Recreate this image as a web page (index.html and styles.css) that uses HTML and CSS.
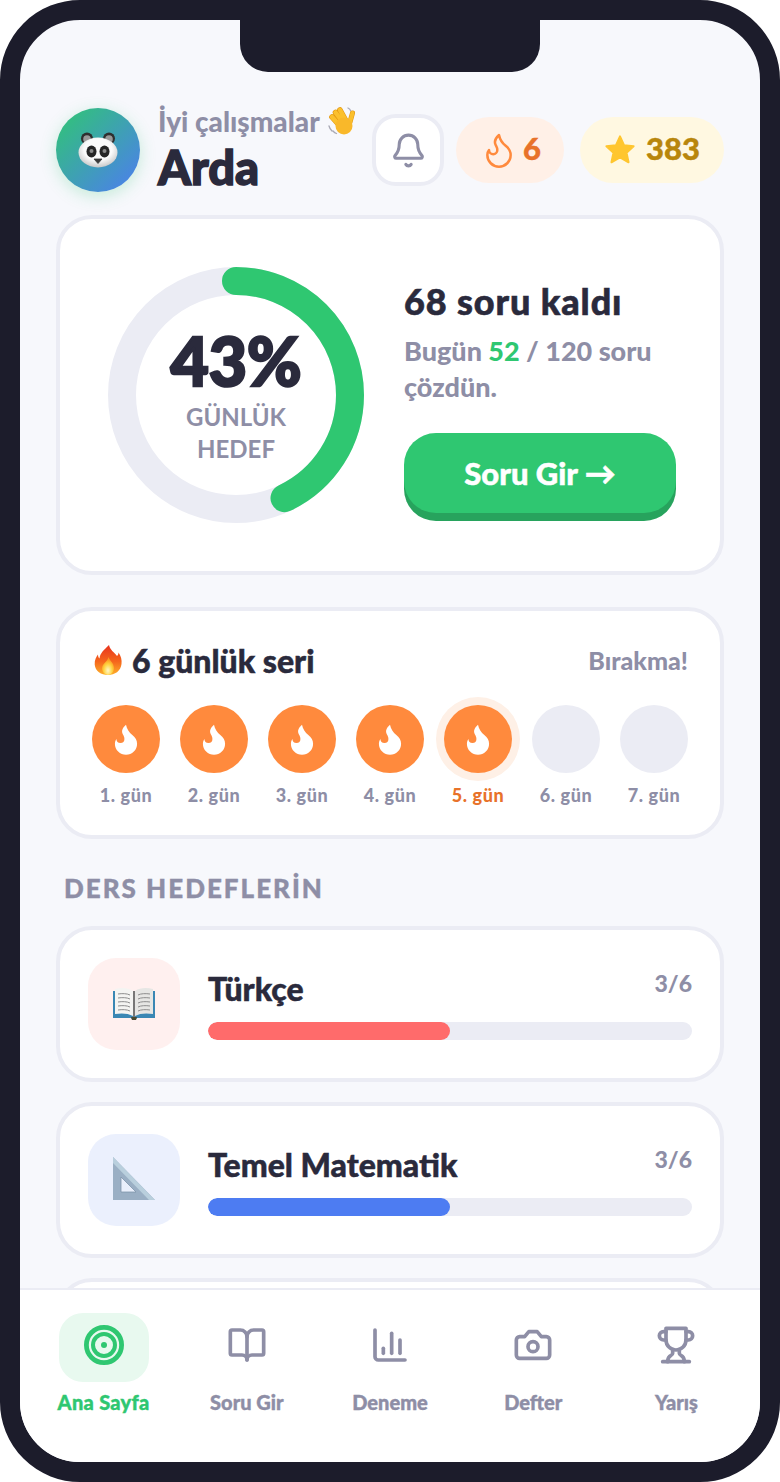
FILE: index.html
```html
<!DOCTYPE html>
<html lang="tr">
<head>
  <meta charset="UTF-8" />
  <meta name="viewport" content="width=device-width, initial-scale=1.0"/>
  <title>Ana Sayfa</title>
  <link rel="stylesheet" href="styles.css">
</head>
<body>
  <svg class="defs" width="0" height="0">
    <symbol id="flame" viewBox="0 0 24 24">
      <path d="M8.5 14.5A2.5 2.5 0 0 0 11 12c0-1.38-.5-2-1-3-1.072-2.143-.224-4.054 2-6 .5 2.5 2 4.9 4 6.5 2 1.6 3 3.5 3 5.5a7 7 0 1 1-14 0c0-1.153.433-2.294 1-3a2.5 2.5 0 0 0 2.5 2.5z"/>
    </symbol>
  </svg>

  <div class="phone">
    <div class="notch"></div>

    <main class="screen">
      <header class="top">
        <div class="avatar">
          <svg class="panda" viewBox="0 0 40 36">
            <defs>
              <radialGradient id="face" cx=".5" cy=".4" r=".65">
                <stop offset=".55" stop-color="#fbfbfb"/>
                <stop offset="1" stop-color="#bdbdbd"/>
              </radialGradient>
            </defs>
            <circle cx="9" cy="6.500" r="6" fill="#2f2f2f"/>
            <circle cx="31" cy="6.500" r="6" fill="#2f2f2f"/>
            <circle cx="9" cy="7" r="3.800" fill="#999"/>
            <circle cx="31" cy="7" r="3.800" fill="#999"/>
            <ellipse cx="20" cy="20.500" rx="19.500" ry="15" fill="url(#face)"/>
            <ellipse cx="13.500" cy="19.500" rx="5" ry="6" fill="#262626"/>
            <ellipse cx="26.500" cy="19.500" rx="5" ry="6" fill="#262626"/>
            <circle cx="13.500" cy="19" r="2" fill="#8a8a8a"/>
            <circle cx="26.500" cy="19" r="2" fill="#8a8a8a"/>
            <path d="M16 27h8l-4 4.500z" fill="#3a3a3a" stroke="#3a3a3a" stroke-width=".8" stroke-linejoin="round"/>
          </svg>
        </div>
        <div class="hello">
          <div class="hello-line">İyi çalışmalar
            <svg class="wave" viewBox="0 0 30 30">
              <path d="M3 20c.5 2 1.500 3.500 3 5M7 25c1 1.200 2 2 3.500 2.500M22 2c1.200.5 2.200 1.500 2.800 3" fill="none" stroke="#a9a9b5" stroke-width="1.300" stroke-linecap="round"/>
              <g fill="none" stroke-linecap="round">
                <path d="M6 11l8 9M9.500 6.500l7.500 10M14 4l6 11" stroke="#e2960f" stroke-width="5.600"/>
                <path d="M6 11l8 9M9.500 6.500l7.500 10M14 4l6 11" stroke="#fbc02d" stroke-width="4.500"/>
                <path d="M26.500 7l-2.500 9" stroke="#e2960f" stroke-width="5"/>
                <path d="M26.500 7l-2.500 9" stroke="#fbc02d" stroke-width="4"/>
              </g>
              <circle cx="18" cy="20" r="8.500" fill="#f9b82a"/>
            </svg>
          </div>
          <div class="name">Arda</div>
        </div>
        <div class="bell-btn">
          <svg class="ico" viewBox="0 0 24 24">
            <path d="M10.268 21a2 2 0 0 0 3.464 0"/>
            <path d="M3.262 15.326A1 1 0 0 0 4 17h16a1 1 0 0 0 .74-1.673C19.41 13.956 18 12.499 18 8A6 6 0 0 0 6 8c0 4.499-1.411 5.956-2.738 7.326"/>
          </svg>
        </div>
        <div class="pill pill-fire">
          <svg class="pill-flame"><use href="#flame"/></svg>
          <span>6</span>
        </div>
        <div class="pill pill-star">
          <svg class="pill-icon" viewBox="0 0 24 24">
            <path d="M12 1.800l3 6.600 7.200.8-5.300 4.900 1.500 7.100L12 17.600l-6.400 3.600 1.500-7.100L1.800 9.200l7.200-.8z" fill="#ffc62f" stroke="#ffc62f" stroke-width="1.500" stroke-linejoin="round"/>
          </svg>
          <span>383</span>
        </div>
      </header>

      <section class="card goal">
        <div class="ring">
          <svg viewBox="0 0 256 256">
            <circle class="ring-bg" cx="128" cy="128" r="114"/>
            <circle class="ring-val" cx="128" cy="128" r="114" pathLength="100" stroke-dasharray="43 100" transform="rotate(-90 128 128)"/>
          </svg>
          <div class="ring-text">
            <div class="percent">43%</div>
            <div class="ring-label">GÜNLÜK<br>HEDEF</div>
          </div>
        </div>
        <div class="goal-side">
          <h2>68 soru kaldı</h2>
          <p>Bugün <b>52</b> / 120 soru çözdün.</p>
          <button class="btn">Soru Gir →</button>
        </div>
      </section>

      <section class="card streak">
        <div class="streak-head">
          <div class="streak-title">
            <svg class="fire-emoji" viewBox="0 0 28 32">
              <defs>
                <linearGradient id="fire" x1="0" y1="0" x2="0" y2="1">
                  <stop offset="0" stop-color="#e8321e"/>
                  <stop offset=".55" stop-color="#f5661c"/>
                  <stop offset="1" stop-color="#fdb02a"/>
                </linearGradient>
                <radialGradient id="fire-core" cx=".5" cy=".75" r=".6">
                  <stop offset="0" stop-color="#fff7c8"/>
                  <stop offset=".6" stop-color="#ffd23e"/>
                  <stop offset="1" stop-color="#fb9a22"/>
                </radialGradient>
              </defs>
              <path d="M15 1c1 5 5 7 8 11 1-1 1.500-2 1.500-3.500C27 12 28 16 27.500 20c-.8 7-6.500 11-13.500 11S1.200 27 .7 20.500C.4 16 2.500 12.500 4 10.500c0 2 .5 3 1.500 4C6 9 10 6 15 1z" fill="url(#fire)"/>
              <path d="M14.500 13c.5 3 5.500 6 5.500 11 0 4-2.800 7-6 7s-6-3-6-6.500c0-5 5.500-6.500 6.500-11.500z" fill="url(#fire-core)"/>
            </svg>
            <span>6 günlük seri</span>
          </div>
          <span class="streak-note">Bırakma!</span>
        </div>
        <div class="days">
          <div class="day">
            <div class="dot done"><svg><use href="#flame"/></svg></div>
            <span>1. gün</span>
          </div>
          <div class="day">
            <div class="dot done"><svg><use href="#flame"/></svg></div>
            <span>2. gün</span>
          </div>
          <div class="day">
            <div class="dot done"><svg><use href="#flame"/></svg></div>
            <span>3. gün</span>
          </div>
          <div class="day">
            <div class="dot done"><svg><use href="#flame"/></svg></div>
            <span>4. gün</span>
          </div>
          <div class="day today">
            <div class="dot done"><svg><use href="#flame"/></svg></div>
            <span>5. gün</span>
          </div>
          <div class="day">
            <div class="dot"></div>
            <span>6. gün</span>
          </div>
          <div class="day">
            <div class="dot"></div>
            <span>7. gün</span>
          </div>
        </div>
      </section>

      <h3 class="section-title">DERS HEDEFLERİN</h3>

      <section class="card subject">
        <div class="subject-icon red-bg">
          <svg class="book" viewBox="0 0 44 36">
            <path d="M1 5h42v27H25l-1.500 2h-3L19 32H1z" fill="#3a87b4"/>
            <path d="M3 3c6-1.500 13-1.500 18 2v25c-5-3-12-3-18-2z" fill="#f4f4f2"/>
            <path d="M41 3c-6-1.500-13-1.500-18 2v25c5-3 12-3 18-2z" fill="#e6e6e4"/>
            <path d="M6 8c4-.6 9-.6 12 1M6 12c4-.6 9-.6 12 1M6 16c4-.6 9-.6 12 1M6 20c4-.6 9-.6 12 1M6 24c4-.6 9-.6 12 1M38 8c-4-.6-9-.6-12 1M38 12c-4-.6-9-.6-12 1M38 16c-4-.6-9-.6-12 1M38 20c-4-.6-9-.6-12 1M38 24c-4-.6-9-.6-12 1" fill="none" stroke="#8d8d8d" stroke-width="1"/>
            <path d="M21 5h2v26h-2z" fill="#777"/>
            <path d="M19 31h6l-1 3h-4z" fill="#4a4a30"/>
          </svg>
        </div>
        <div class="subject-body">
          <div class="subject-head">
            <span class="subject-name">Türkçe</span>
            <span class="subject-count">3/6</span>
          </div>
          <div class="bar"><div class="bar-fill red" style="width:50%"></div></div>
        </div>
      </section>

      <section class="card subject">
        <div class="subject-icon blue-bg">
          <svg class="square" viewBox="0 0 44 44">
            <path d="M1 1l42 43H1z" fill="#9aafc4"/>
            <path d="M1 1l42 43h-6L1 7z" fill="#b9cfdd"/>
            <path d="M9 21l15 15H9z" fill="#eaf0fc" stroke="#7f95ab" stroke-width=".8"/>
          </svg>
        </div>
        <div class="subject-body">
          <div class="subject-head">
            <span class="subject-name">Temel Matematik</span>
            <span class="subject-count">3/6</span>
          </div>
          <div class="bar"><div class="bar-fill blue" style="width:50%"></div></div>
        </div>
      </section>

      <section class="card subject"></section>
    </main>

    <nav class="tabs">
      <div class="tab active">
        <div class="tab-icon">
          <svg class="target" viewBox="0 0 40 40">
            <circle cx="20" cy="20" r="17.600" stroke-width="4.800"/>
            <circle cx="20" cy="20" r="11" stroke-width="4"/>
            <circle cx="20" cy="20" r="3" stroke="none" fill="#2fc771"/>
          </svg>
        </div>
        <span>Ana Sayfa</span>
      </div>
      <div class="tab">
        <div class="tab-icon">
          <svg class="ico" viewBox="0 0 24 24">
            <path d="M12 7v14"/>
            <path d="M3 18a1 1 0 0 1-1-1V4a1 1 0 0 1 1-1h5a4 4 0 0 1 4 4 4 4 0 0 1 4-4h5a1 1 0 0 1 1 1v13a1 1 0 0 1-1 1h-6a3 3 0 0 0-3 3 3 3 0 0 0-3-3z"/>
          </svg>
        </div>
        <span>Soru Gir</span>
      </div>
      <div class="tab">
        <div class="tab-icon">
          <svg class="ico" viewBox="0 0 24 24">
            <path d="M3 3v16a2 2 0 0 0 2 2h16"/>
            <path d="M8 17v-3"/>
            <path d="M13 17V5"/>
            <path d="M18 17V9"/>
          </svg>
        </div>
        <span>Deneme</span>
      </div>
      <div class="tab">
        <div class="tab-icon">
          <svg class="ico" viewBox="0 0 24 24">
            <path d="M14.500 4h-5L7 7H4a2 2 0 0 0-2 2v9a2 2 0 0 0 2 2h16a2 2 0 0 0 2-2V9a2 2 0 0 0-2-2h-3l-2.500-3z"/>
            <circle cx="12" cy="13" r="3"/>
          </svg>
        </div>
        <span>Defter</span>
      </div>
      <div class="tab">
        <div class="tab-icon">
          <svg class="ico" viewBox="0 0 24 24">
            <path d="M6 9H4.500a2.500 2.500 0 0 1 0-5H6"/>
            <path d="M18 9h1.500a2.500 2.500 0 0 0 0-5H18"/>
            <path d="M4 22h16"/>
            <path d="M10 14.660V17c0 .55-.47.98-.97 1.210C7.850 18.750 7 20.240 7 22"/>
            <path d="M14 14.660V17c0 .55.47.98.97 1.210C16.150 18.750 17 20.240 17 22"/>
            <path d="M18 2H6v7a6 6 0 0 0 12 0V2z"/>
          </svg>
        </div>
        <span>Yarış</span>
      </div>
    </nav>
  </div>
</body>
</html>
```

FILE: styles.css
```css
* {
  box-sizing: border-box;
}
body {
  margin: 0;
  background: #fff;
  font-family: "Lato", sans-serif;
  color: #2a2a3c;
}
.defs {
  position: absolute;
}
.phone {
  position: relative;
  width: 780px;
  height: 1482px;
  border: 20px solid #1c1c2b;
  border-radius: 80px;
  background: #f7f8fc;
  overflow: hidden;
}
.notch {
  position: absolute;
  top: 0;
  left: 220px;
  width: 300px;
  height: 52px;
  background: #1c1c2b;
  border-radius: 0 0 28px 28px;
  z-index: 3;
}
.screen {
  padding: 88px 36px 0;
}

/* ust kisim */
.top {
  display: flex;
  align-items: center;
  height: 84px;
  margin-bottom: 23px;
}
.avatar {
  width: 84px;
  height: 84px;
  flex: none;
  border-radius: 50%;
  background: linear-gradient(135deg, #2fc771, #4d7cf2);
  box-shadow: 0 4px 16px rgba(47, 199, 113, 0.25);
  display: flex;
  align-items: center;
  justify-content: center;
}
.panda {
  width: 40px;
  height: 36px;
}
.hello {
  margin-left: 18px;
  width: 214px;
}
.hello-line {
  display: flex;
  align-items: center;
  gap: 6px;
  height: 26px;
  font-size: 28px;
  font-weight: 900;
  line-height: 26px;
  color: #8e8ea6;
  white-space: nowrap;
}
.wave {
  width: 30px;
  height: 30px;
  flex: none;
}
.name {
  font-size: 47px;
  font-weight: 900;
  line-height: 50px;
  margin-top: 8px;
  -webkit-text-stroke: 1.5px #2a2a3c;
}
.bell-btn {
  width: 72px;
  height: 72px;
  flex: none;
  background: #fff;
  border: 4px solid #ebecf4;
  border-radius: 24px;
  display: flex;
  align-items: center;
  justify-content: center;
}
.ico {
  width: 40px;
  height: 40px;
  fill: none;
  stroke: #8e8ea6;
  stroke-width: 2.200;
  stroke-linecap: round;
  stroke-linejoin: round;
}
.bell-btn .ico {
  width: 37px;
  height: 37px;
  stroke-width: 2;
}
.pill {
  height: 66px;
  flex: none;
  border-radius: 33px;
  display: flex;
  align-items: center;
  justify-content: center;
  gap: 10px;
  font-size: 31px;
  font-weight: 900;
  -webkit-text-stroke: 0.4px currentColor;
}
.pill span {
  margin-top: -5px;
}
.pill-fire {
  width: 108px;
  margin-left: 12px;
  gap: 4px;
  background: #fff0e7;
  color: #e8722a;
}
.pill-star {
  width: 144px;
  margin-left: 16px;
  background: #fff8e1;
  color: #b8860b;
}
.pill-flame {
  width: 40px;
  height: 40px;
  fill: none;
  stroke: #ff8a3d;
  stroke-width: 1.500;
  stroke-linecap: round;
  stroke-linejoin: round;
}
.pill-icon {
  width: 32px;
  height: 32px;
}

/* kartlar */
.card {
  background: #fff;
  border: 4px solid #ebecf4;
  border-radius: 36px;
}
.goal {
  display: flex;
  align-items: center;
  gap: 40px;
  height: 360px;
  padding: 0 44px 0 48px;
  margin-bottom: 32px;
}
.ring {
  position: relative;
  width: 256px;
  height: 256px;
  flex: none;
}
.ring svg {
  display: block;
  width: 256px;
  height: 256px;
}
.ring-bg,
.ring-val {
  fill: none;
  stroke-width: 28;
}
.ring-bg {
  stroke: #ebecf4;
}
.ring-val {
  stroke: #2fc771;
  stroke-linecap: round;
}
.ring-text {
  position: absolute;
  top: 60px;
  left: 0;
  right: 0;
  text-align: center;
}
.percent {
  font-size: 66px;
  font-weight: 900;
  line-height: 68px;
  -webkit-text-stroke: 2.500px #2a2a3c;
}
.ring-label {
  margin-top: 6px;
  font-size: 24px;
  font-weight: 700;
  line-height: 32px;
  color: #8e8ea6;
}
.goal-side {
  flex: 1;
  padding-top: 10px;
}
.goal-side h2 {
  margin: 0 0 10px;
  font-size: 36px;
  font-weight: 900;
  line-height: 44px;
  letter-spacing: 0.9px;
  -webkit-text-stroke: 0.6px #2a2a3c;
}
.goal-side p {
  margin: 0 0 28px;
  font-size: 27px;
  font-weight: 900;
  line-height: 36px;
  color: #8e8ea6;
}
.goal-side b {
  color: #2fc771;
  font-weight: 900;
}
.btn {
  display: block;
  width: 100%;
  height: 80px;
  margin-bottom: 8px;
  border: none;
  border-radius: 32px;
  background: #2fc771;
  box-shadow: 0 8px 0 #27a35d;
  color: #fff;
  font-family: inherit;
  font-size: 31px;
  font-weight: 900;
  -webkit-text-stroke: 0.5px #fff;
}

.streak {
  padding: 28px 32px 0;
  height: 232px;
}
.streak-head {
  display: flex;
  align-items: center;
  justify-content: space-between;
  height: 42px;
}
.streak-title {
  display: flex;
  align-items: center;
  gap: 10px;
  font-size: 32px;
  font-weight: 900;
  -webkit-text-stroke: 0.5px #2a2a3c;
}
.fire-emoji {
  width: 28px;
  height: 32px;
  margin-left: 2px;
}
.streak-note {
  font-size: 25px;
  font-weight: 900;
  color: #8e8ea6;
}
.days {
  display: flex;
  gap: 20px;
  margin-top: 24px;
}
.day {
  width: 68px;
  display: flex;
  flex-direction: column;
  align-items: center;
  gap: 10px;
}
.day span {
  font-size: 18px;
  font-weight: 900;
  line-height: 24px;
  letter-spacing: 0.6px;
  color: #8e8ea6;
  white-space: nowrap;
}
.dot {
  width: 68px;
  height: 68px;
  border-radius: 50%;
  background: #ebecf4;
  display: flex;
  align-items: center;
  justify-content: center;
}
.dot.done {
  background: #ff8a3d;
}
.dot svg {
  width: 38px;
  height: 38px;
  fill: #fff;
}
.today .dot {
  box-shadow: 0 0 0 8px #fef0e6;
}
.today span {
  color: #e8722a;
}

.section-title {
  margin: 31px 0 20px 8px;
  font-size: 26px;
  font-weight: 900;
  line-height: 36px;
  letter-spacing: 2px;
  color: #8e8ea6;
  -webkit-text-stroke: 0.4px #8e8ea6;
}

.subject {
  display: flex;
  align-items: center;
  gap: 28px;
  height: 156px;
  padding: 0 28px;
  margin-bottom: 20px;
}
.subject-icon {
  width: 92px;
  height: 92px;
  flex: none;
  border-radius: 28px;
  display: flex;
  align-items: center;
  justify-content: center;
}
.red-bg {
  background: #fff0ef;
}
.blue-bg {
  background: #ebf0fd;
}
.book {
  width: 44px;
  height: 36px;
}
.square {
  width: 44px;
  height: 44px;
  margin-top: -4px;
}
.subject-body {
  flex: 1;
}
.subject-head {
  display: flex;
  justify-content: space-between;
  align-items: flex-start;
  height: 50px;
  margin-bottom: 4px;
}
.subject-name {
  font-size: 32px;
  font-weight: 900;
  line-height: 42px;
  -webkit-text-stroke: 0.5px #2a2a3c;
}
.subject-count {
  font-size: 23px;
  font-weight: 900;
  line-height: 30px;
  color: #8e8ea6;
}
.bar {
  height: 18px;
  border-radius: 9px;
  background: #ebecf4;
  overflow: hidden;
}
.bar-fill {
  height: 100%;
  border-radius: 9px;
}
.red {
  background: #ff6b6b;
}
.blue {
  background: #4d7cf2;
}

/* alt menu */
.tabs {
  position: absolute;
  left: 0;
  right: 0;
  bottom: 0;
  height: 174px;
  padding: 23px 12px 0;
  background: #fff;
  border-top: 2px solid #ebecf4;
  display: flex;
  z-index: 2;
}
.tab {
  flex: 1;
  display: flex;
  flex-direction: column;
  align-items: center;
  font-size: 20px;
  font-weight: 900;
  color: #8e8ea6;
  -webkit-text-stroke: 0.4px currentColor;
}
.tab-icon {
  width: 90px;
  height: 69px;
  padding-bottom: 6px;
  border-radius: 24px;
  display: flex;
  align-items: center;
  justify-content: center;
  margin-bottom: 8px;
}
.target {
  width: 40px;
  height: 40px;
  fill: none;
  stroke: #2fc771;
}
.active {
  color: #2fc771;
  letter-spacing: 0.3px;
}
.active .tab-icon {
  background: #e8f9ef;
}
```
